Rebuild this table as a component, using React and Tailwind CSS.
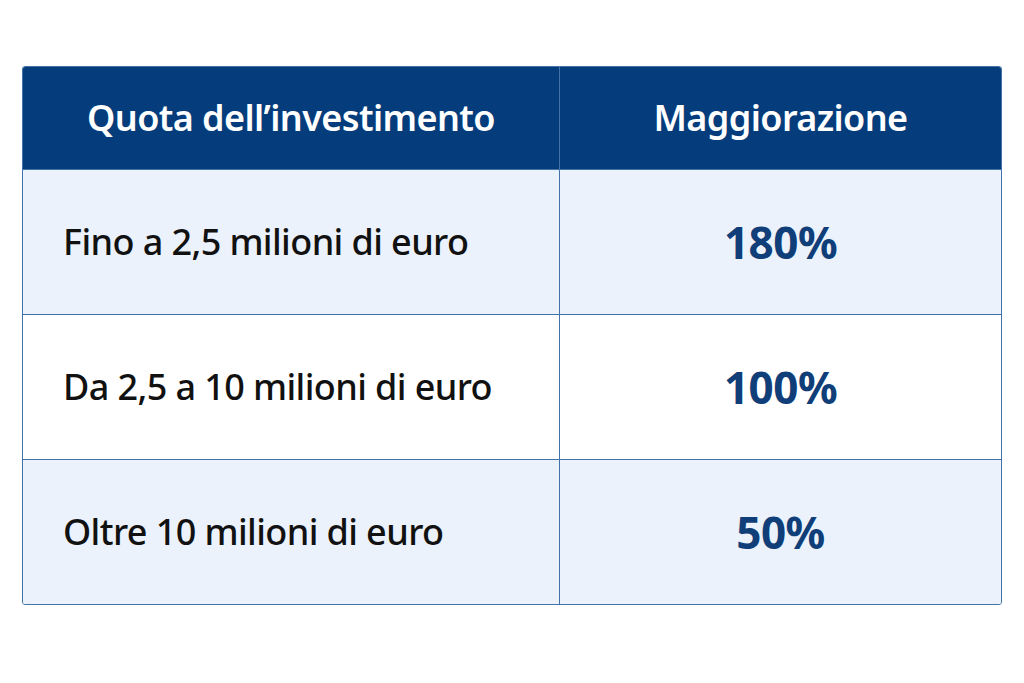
const rows = [
  { label: "Fino a 2,5 milioni di euro", value: "180%", shaded: true },
  { label: "Da 2,5 a 10 milioni di euro", value: "100%", shaded: false },
  { label: "Oltre 10 milioni di euro", value: "50%", shaded: true },
];

export default function App() {
  return (
    <div
      className="w-[1024px] h-[683px] bg-white pt-[66px] pl-[22px]"
      style={{ fontFamily: "'Noto Sans', 'Open Sans', sans-serif" }}
    >
      <div className="w-[980px] rounded-[3px] border border-[#4272a8] overflow-hidden">
        {/* header */}
        <div className="grid grid-cols-[537px_1fr] h-[102px] bg-[#053c7b] text-white">
          <div className="flex items-center justify-center border-r border-[#4272a8] text-[36px] font-semibold tracking-[-0.6px]">
            Quota dell’investimento
          </div>
          <div className="flex items-center justify-center text-[36px] font-semibold tracking-[-0.6px]">
            Maggiorazione
          </div>
        </div>
        {rows.map((row, i) => (
          <div
            key={i}
            className={
              "grid grid-cols-[537px_1fr] h-[145px] border-t border-[#4272a8] " +
              (row.shaded ? "bg-[#ebf2fb]" : "bg-white")
            }
          >
            <div className="flex items-center pl-[40px] border-r border-[#4272a8] text-[36px] font-medium text-[#111] tracking-[-0.6px]">
              {row.label}
            </div>
            <div className="flex items-center justify-center text-[44px] font-bold text-[#0f3e78] tracking-[-0.5px]">
              {row.value}
            </div>
          </div>
        ))}
      </div>
    </div>
  );
}
